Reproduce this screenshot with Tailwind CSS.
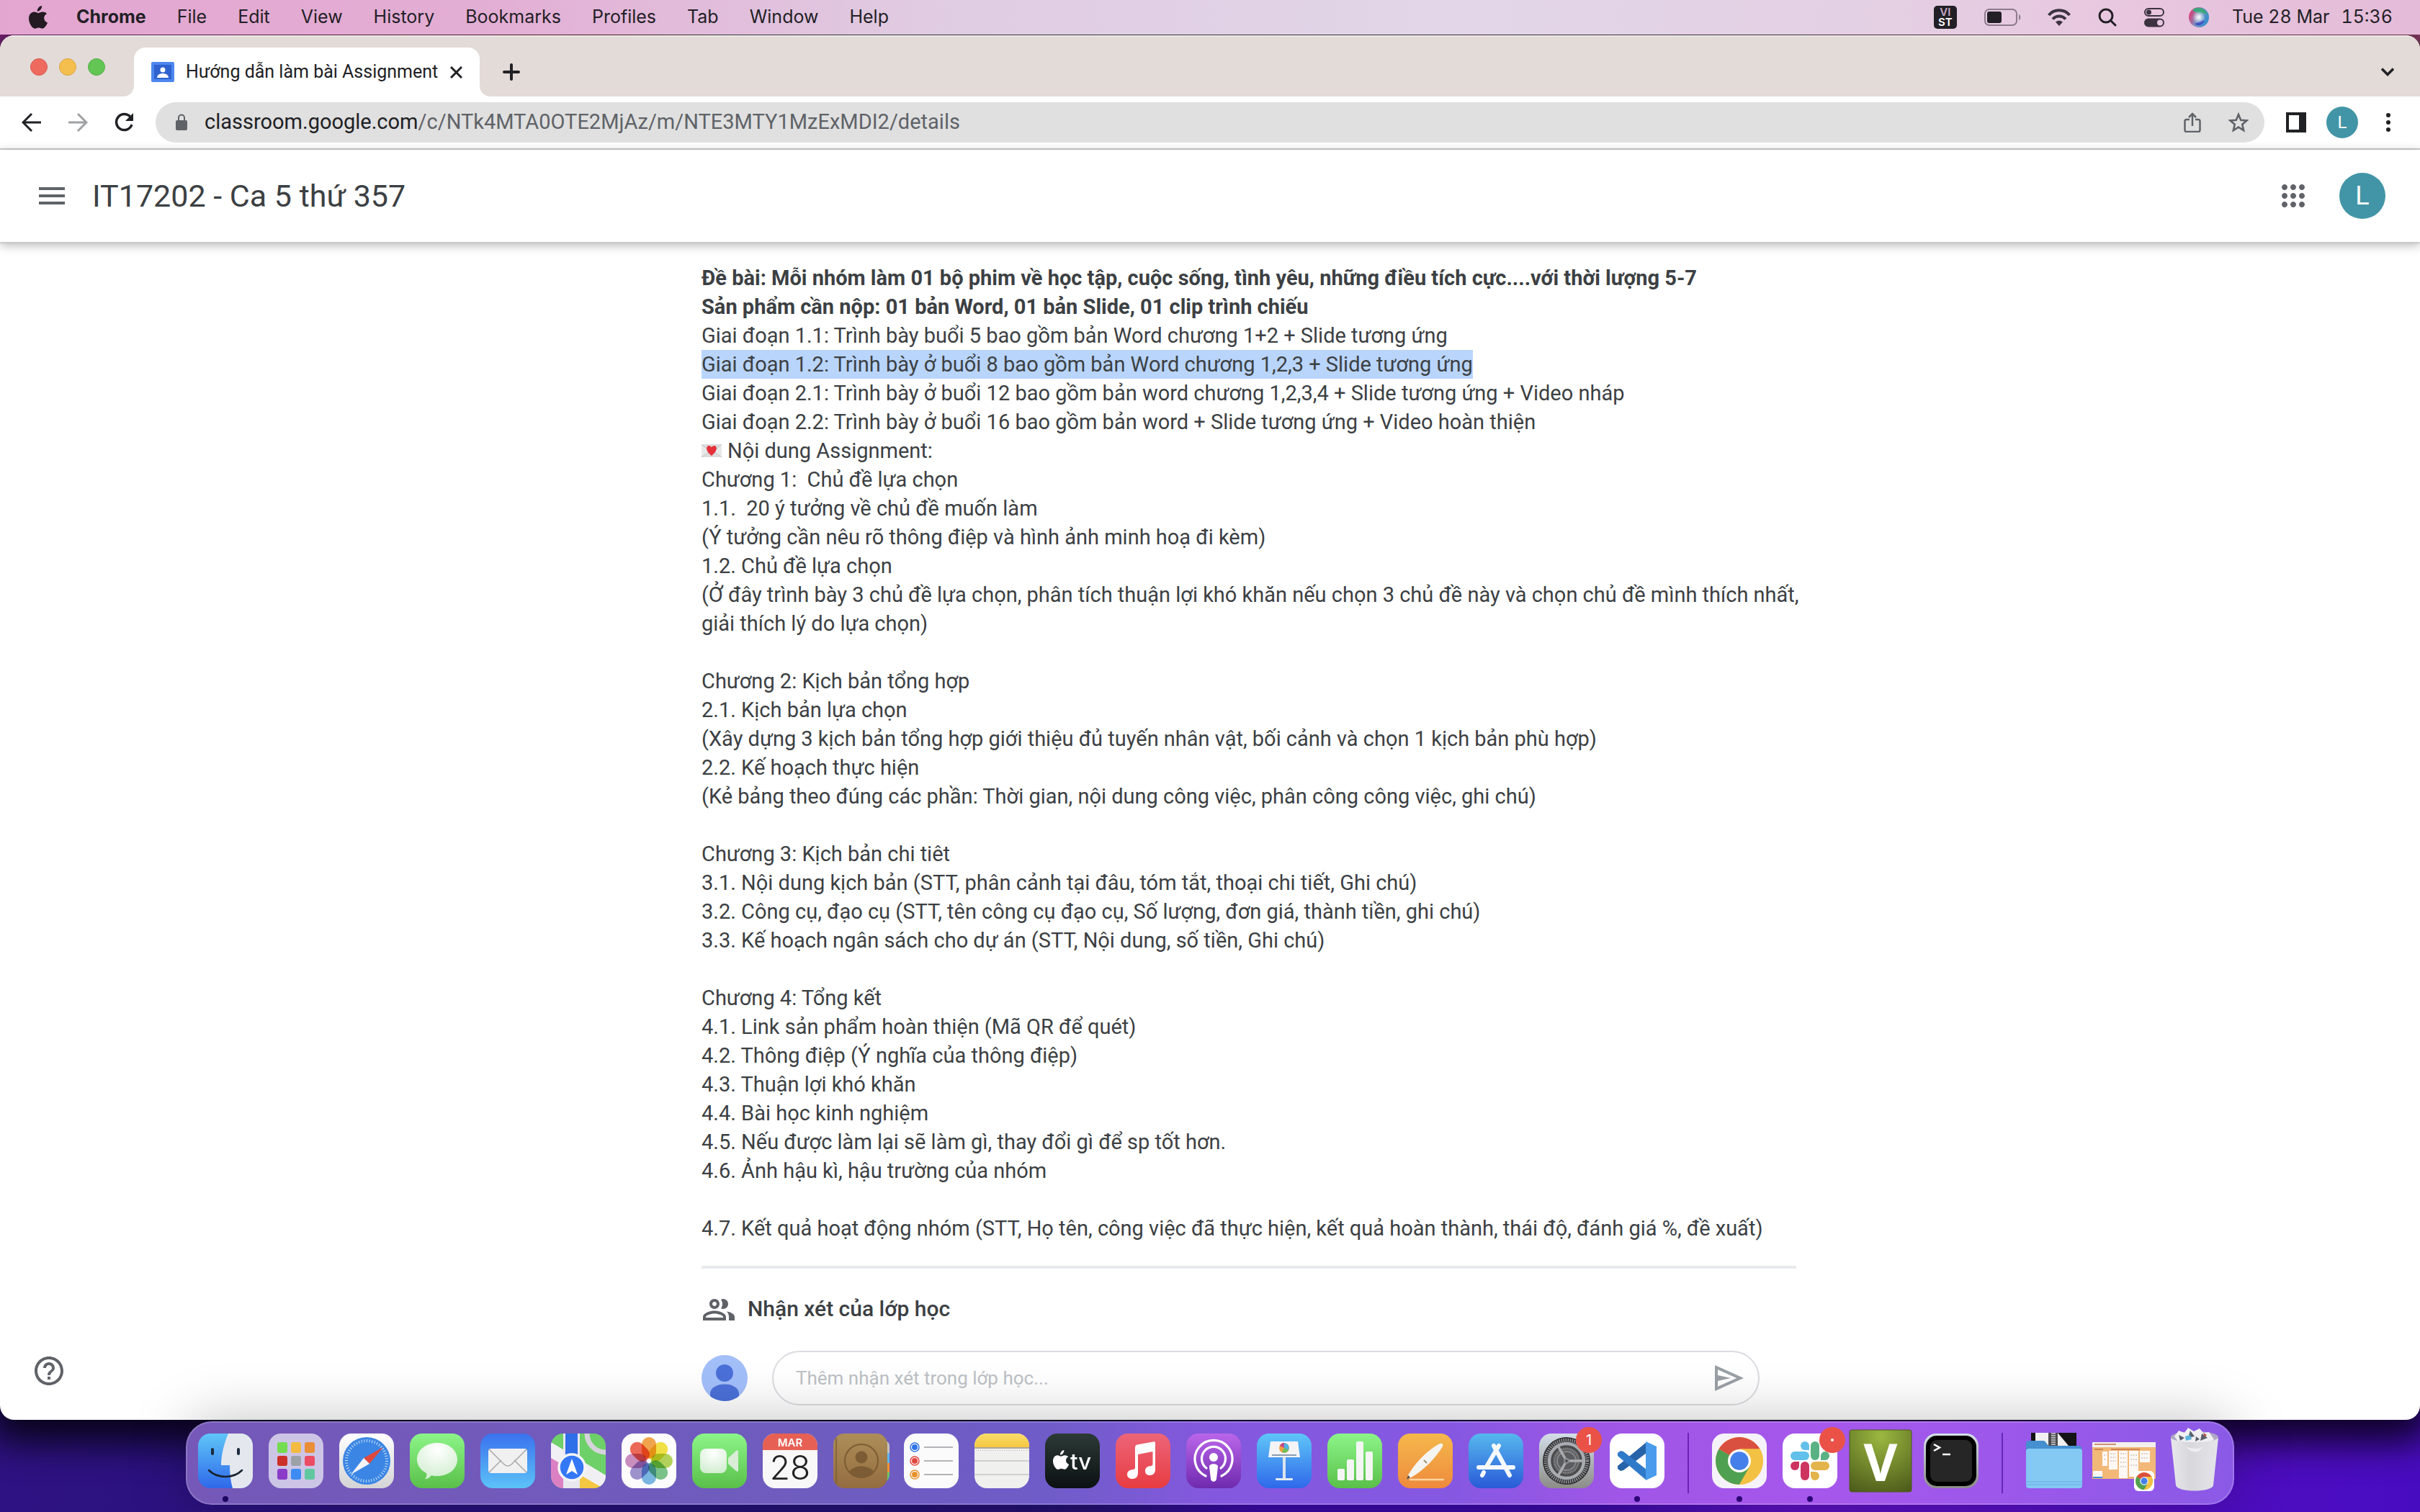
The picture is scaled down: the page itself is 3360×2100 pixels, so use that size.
<!DOCTYPE html>
<html lang="vi">
<head>
<meta charset="utf-8">
<title>Hướng dẫn làm bài Assignment</title>
<script src="https://cdn.jsdelivr.net/npm/@tailwindcss/browser@4"></script>
</head>
<body class="flex h-screen flex-col overflow-hidden bg-[linear-gradient(to_right,#8c2a8c,#7a3040_25%,#56606c_30%,#585060_60%,#a04878),linear-gradient(to_right,#2e1283,#231175_30%,#23106f_45%,#3a0aa5_52%,#3a0aa5_66%,#5c10c0_74%,#480cc0)] bg-[length:100%_200px,100%_100%] bg-no-repeat font-['Roboto',sans-serif] text-[#3c4043]">

<!-- System menu bar -->
<header class="relative z-10 flex h-12 shrink-0 items-center justify-between bg-[linear-gradient(to_right,#e3a6d0,#e3aed4_20%,#e0cbe2_38%,#e2d6e8_60%,#e4cfe3_78%,#e8c7df_88%,#e4bbd8)] pr-[38px] pl-10 font-['Inter',sans-serif] text-[25px] text-[#231f26]">
  <nav class="flex items-center gap-[43px]" aria-label="Menu bar">
    <a href="#" class="-mr-[3px]" aria-label="Apple"><svg class="h-8 w-[26px]" viewBox="0 0 26 32" fill="#231a22"><path d="M18 0c.3 2.300-.6 4.200-1.800 5.600-1.200 1.400-2.800 2.300-4.400 2.100-.2-2 .7-3.900 1.800-5.200C14.800 1.100 16.500.1 18 0zM25 11c-2.600 1.600-3.900 3.500-3.800 6.200.1 3 1.800 5 4.800 6.200-.9 2.700-4.100 8.200-7.200 8.200-2 0-2.700-1.200-5.200-1.200S10.300 31.600 8.500 31.700C4.900 31.800 0 24.500 0 17.800 0 12 3.600 8.700 7.300 8.600c2.400 0 4.400 1.600 5.900 1.600 1.400 0 3.800-1.800 6.600-1.600 1.200.1 3.700.5 5.200 2.400z"/></svg></a>
    <a href="#" class="font-bold">Chrome</a>
    <a href="#">File</a>
    <a href="#">Edit</a>
    <a href="#">View</a>
    <a href="#">History</a>
    <a href="#">Bookmarks</a>
    <a href="#">Profiles</a>
    <a href="#">Tab</a>
    <a href="#">Window</a>
    <a href="#">Help</a>
  </nav>
  <div class="flex items-center">
    <div class="mr-[38px] flex size-8 flex-col items-center justify-center rounded-[5px] bg-[#231f26] text-[15px] leading-[14px] font-semibold text-[#c5a9c4]"><span>VI</span><span class="text-white">ST</span></div>
    <svg class="mr-9 h-6 w-[52px]" viewBox="0 0 52 24"><rect x="1" y="1" width="44" height="22" rx="6" fill="none" stroke="#8d7a8d" stroke-width="2"/><rect x="4" y="4" width="20" height="16" rx="3" fill="#231f26"/><path d="M48 8c3 1 3 7 0 8z" fill="#8d7a8d"/></svg>
    <svg class="mr-[38px] h-6 w-8" viewBox="0 0 32 24" fill="none" stroke="#3c3240" stroke-width="4"><path d="M1.500 9C9 0 23 0 30.500 9M7 14.500c5-5.500 13-5.500 18 0"/><path d="M16 24l-5-5.500c3-2.500 7-2.500 10 0z" fill="#3c3240" stroke="none"/></svg>
    <svg class="mr-[38px] h-[26px] w-[26px]" viewBox="0 0 26 26" fill="none" stroke="#231f26" stroke-width="3" stroke-linecap="round"><circle cx="11" cy="11" r="9"/><path d="M18 18l6 6"/></svg>
    <svg class="mr-[34px] h-7 w-7" viewBox="0 0 28 28"><rect x="1" y="2" width="26" height="10" rx="5" fill="none" stroke="#3c3240" stroke-width="2"/><circle cx="6.500" cy="7" r="3.500" fill="#3c3240"/><rect y="15.500" width="28" height="12" rx="6" fill="#3c3240"/><circle cx="22" cy="21.500" r="4" fill="#e6c8e0"/></svg>
    <svg class="mr-8 h-7 w-7" viewBox="0 0 28 28"><defs><linearGradient id="siri" x1="0" y1=".3" x2="1" y2=".7"><stop offset="0" stop-color="#e0396f"/><stop offset=".45" stop-color="#7f8fc0"/><stop offset="1" stop-color="#2a8ed0"/></linearGradient><radialGradient id="glow"><stop offset="0" stop-color="#fff"/><stop offset="1" stop-color="#fff" stop-opacity="0"/></radialGradient></defs><circle cx="14" cy="14" r="14" fill="url(#siri)"/><path d="M5 4c6-6 18-4 21 6-6-2-14 0-21-6z" fill="#3da57f"/><path d="M8 23c5-1 10-6 14-4-3 6-10 8-14 4z" fill="#3b4dc0"/><circle cx="14" cy="14" r="9" fill="url(#glow)"/></svg>
    <time class="flex gap-4 tabular-nums"><span>Tue 28 Mar</span><span>15:36</span></time>
  </div>
</header>

<!-- Browser window -->
<main class="relative mt-px flex min-h-0 flex-1 flex-col overflow-hidden rounded-[20px] bg-white shadow-[0_16px_50px_16px_#000000cc]">
  <div class="flex h-[85px] shrink-0 items-end bg-[#e3dbd8] shadow-[inset_0_2px_0_#efe9e7]">
    <div class="mb-[29px] ml-[42px] flex gap-4">
      <button class="size-6 rounded-full border border-[#d8584d] bg-[#ee6a5f]" aria-label="Close window"></button>
      <button class="size-6 rounded-full border border-[#d9a441] bg-[#f5bf4f]" aria-label="Minimise"></button>
      <button class="size-6 rounded-full border border-[#54ae46] bg-[#62c554]" aria-label="Zoom"></button>
    </div>
    <svg class="ml-6 size-4" viewBox="0 0 16 16" fill="#fff"><path d="M16 0v16H0C10 16 16 10 16 0z"/></svg>
    <div class="flex h-[68px] w-[480px] items-center rounded-t-2xl bg-white pl-6">
      <svg class="mr-4 h-7 w-8" viewBox="0 0 32 28"><rect width="32" height="28" rx="2" fill="#4c86ee"/><rect x="4" y="4" width="24" height="20" fill="#2f62cf"/><circle cx="16" cy="11" r="3.500" fill="#fff"/><path d="M8 22c0-8 16-8 16 0z" fill="#fff"/></svg>
      <span class="w-[352px] truncate text-[25px] text-[#202124]">Hướng dẫn làm bài Assignment</span>
      <button class="ml-[15px]" aria-label="Close tab"><svg class="size-[17px]" viewBox="0 0 17 17" stroke="#202124" stroke-width="3"><path d="M1 1l15 15M16 1L1 16"/></svg></button>
    </div>
    <svg class="size-4" viewBox="0 0 16 16" fill="#fff"><path d="M0 0v16h16C6 16 0 10 0 0z"/></svg>
    <button class="mb-[22px] ml-4" aria-label="New tab"><svg class="size-6" viewBox="0 0 24 24" stroke="#202124" stroke-width="4" stroke-linecap="round"><path d="M12 2v20M2 12h20"/></svg></button>
    <button class="mr-9 mb-7 ml-auto" aria-label="Search tabs"><svg class="h-3 w-[18px]" viewBox="0 0 18 12" fill="none" stroke="#202124" stroke-width="3.500"><path d="M1 1.500l8 8 8-8"/></svg></button>
  </div>

  <div class="flex h-[74px] shrink-0 items-center border-b-2 border-[#cbcbcb] bg-white pr-[41px] pl-[30px]">
    <button class="mr-9" aria-label="Back"><svg class="size-7" viewBox="0 0 28 28" fill="none" stroke="#202124" stroke-width="3"><path d="M27 14H3M14 2L2 14l12 12"/></svg></button>
    <button class="mr-9" aria-label="Forward"><svg class="size-7" viewBox="0 0 28 28" fill="none" stroke="#a0a1a3" stroke-width="3"><path d="M1 14h24M14 2l12 12-12 12"/></svg></button>
    <button class="mr-[30px]" aria-label="Reload"><svg class="size-7" viewBox="0 0 28 28" fill="none" stroke="#202124" stroke-width="3.500"><path d="M23 6.500A11 11 0 1 0 25 17"/><path d="M27 1v11H16z" fill="#202124" stroke="none"/></svg></button>
    <div class="flex h-14 flex-1 items-center rounded-full bg-[#e0e0e0] pr-[22px] pl-7">
      <svg class="mr-6 h-6 w-4" viewBox="0 0 16 24" fill="#5f6368"><rect y="9" width="16" height="14" rx="2"/><path d="M4 10V5.500a4 4 0 0 1 8 0V10" fill="none" stroke="#5f6368" stroke-width="2"/></svg>
      <div class="flex-1 text-[29px] text-[#5f6368]"><span class="text-[#202124]">classroom.google.com</span>/c/NTk4MTA0OTE2MjAz/m/NTE3MTY1MzExMDI2/details</div>
      <button class="mr-[38px]" aria-label="Share"><svg class="h-7 w-6" viewBox="0 0 24 28" fill="none" stroke="#5f6368" stroke-width="2.500"><path d="M8 10H4a2.500 2.500 0 0 0-2.500 2.500v12A2.500 2.500 0 0 0 4 27h16a2.500 2.500 0 0 0 2.500-2.500v-12A2.500 2.500 0 0 0 20 10h-4M12 19V2M7 7l5-5 5 5"/></svg></button>
      <button aria-label="Bookmark"><svg class="size-7" viewBox="0 0 28 28" fill="none" stroke="#5f6368" stroke-width="2.600"><path d="M14 3l3.200 7.700 8.300.7-6.300 5.400 1.900 8.200L14 20.600 6.900 25l1.900-8.200-6.300-5.400 8.300-.7z"/></svg></button>
    </div>
    <button class="ml-[30px]" aria-label="Side panel"><svg class="size-7" viewBox="0 0 28 28"><path d="M0 0h28v28H0z" fill="#202124"/><path d="M4 4h14v20H4z" fill="#fff"/></svg></button>
    <button class="ml-7 size-11 rounded-full bg-[#4295a6] text-2xl text-white" aria-label="Profile">L</button>
    <button class="ml-[39px]" aria-label="More"><svg class="h-[26px] w-1.5" viewBox="0 0 6 26" fill="#202124"><circle cx="3" cy="3" r="3"/><circle cx="3" cy="13" r="3"/><circle cx="3" cy="23" r="3"/></svg></button>
  </div>

  <div class="relative z-10 flex h-32 shrink-0 items-center bg-white pr-12 pl-12 shadow-[0_2px_2px_#c8c9ca,0_4px_14px_#0000004d]">
    <button aria-label="Main menu"><svg class="size-12" viewBox="0 0 24 24" fill="#5f6368"><path d="M3 18h18v-2H3v2zm0-5h18v-2H3v2zm0-7v2h18V6H3z"/></svg></button>
    <h1 class="ml-8 text-[43px]"><a href="#">IT17202 - Ca 5 thứ 357</a></h1>
    <button class="mr-10 ml-auto" aria-label="Google apps"><svg class="size-12" viewBox="0 0 24 24" fill="#5f6368"><path d="M6 8c1.100 0 2-.9 2-2s-.9-2-2-2-2 .9-2 2 .9 2 2 2zm6 12c1.100 0 2-.9 2-2s-.9-2-2-2-2 .9-2 2 .9 2 2 2zm-6 0c1.100 0 2-.9 2-2s-.9-2-2-2-2 .9-2 2 .9 2 2 2zm0-6c1.100 0 2-.9 2-2s-.9-2-2-2-2 .9-2 2 .9 2 2 2zm6 0c1.100 0 2-.9 2-2s-.9-2-2-2-2 .9-2 2 .9 2 2 2zm4-8c0 1.100.9 2 2 2s2-.9 2-2-.9-2-2-2-2 .9-2 2zm-4 2c1.100 0 2-.9 2-2s-.9-2-2-2-2 .9-2 2 .9 2 2 2zm6 6c1.100 0 2-.9 2-2s-.9-2-2-2-2 .9-2 2 .9 2 2 2zm0 6c1.100 0 2-.9 2-2s-.9-2-2-2-2 .9-2 2 .9 2 2 2z"/></svg></button>
    <button class="size-16 rounded-full bg-[#4295a6] text-4xl text-white" aria-label="Account">L</button>
  </div>

  <div class="mx-auto w-full max-w-[1628px] pt-[30px] pl-[108px]">
    <article class="-mr-6 text-[29px] leading-10">
      <p class="font-bold">Đề bài: Mỗi nhóm làm 01 bộ phim về học tập, cuộc sống, tình yêu, những điều tích cực....với thời lượng 5-7</p>
      <p class="font-bold">Sản phẩm cần nộp: 01 bản Word, 01 bản Slide, 01 clip trình chiếu</p>
      <p>Giai đoạn 1.1: Trình bày buổi 5 bao gồm bản Word chương 1+2 + Slide tương ứng</p>
      <p class="w-fit bg-[#b9d5fb]">Giai đoạn 1.2: Trình bày ở buổi 8 bao gồm bản Word chương 1,2,3 + Slide tương ứng</p>
      <p>Giai đoạn 2.1: Trình bày ở buổi 12 bao gồm bản word chương 1,2,3,4 + Slide tương ứng + Video nháp</p>
      <p>Giai đoạn 2.2: Trình bày ở buổi 16 bao gồm bản word + Slide tương ứng + Video hoàn thiện</p>
      <p class="flex items-center gap-2"><svg class="h-[18px] w-7" viewBox="0 0 28 18"><rect width="28" height="18" rx="1" fill="#dcdcdc"/><path d="M0 0l11 10L0 18M28 0L17 10l11 8" fill="#e9e9e9" stroke="#c4c4c4"/><path d="M14 16C4 8 7 2 10.500 2 13 2 14 4.500 14 4.500S15 2 17.500 2C21 2 24 8 14 16z" fill="#e5303a"/></svg>Nội dung Assignment:</p>
      <p>Chương 1:&nbsp; Chủ đề lựa chọn</p>
      <p>1.1.&nbsp; 20 ý tưởng về chủ đề muốn làm</p>
      <p>(Ý tưởng cần nêu rõ thông điệp và hình ảnh minh hoạ đi kèm)</p>
      <p>1.2. Chủ đề lựa chọn</p>
      <p>(Ở đây trình bày 3 chủ đề lựa chọn, phân tích thuận lợi khó khăn nếu chọn 3 chủ đề này và chọn chủ đề mình thích nhất, giải thích lý do lựa chọn)</p>
      <p class="mt-10">Chương 2: Kịch bản tổng hợp</p>
      <p>2.1. Kịch bản lựa chọn</p>
      <p>(Xây dựng 3 kịch bản tổng hợp giới thiệu đủ tuyến nhân vật, bối cảnh và chọn 1 kịch bản phù hợp)</p>
      <p>2.2. Kế hoạch thực hiện</p>
      <p>(Kẻ bảng theo đúng các phần: Thời gian, nội dung công việc, phân công công việc, ghi chú)</p>
      <p class="mt-10">Chương 3: Kịch bản chi tiêt</p>
      <p>3.1. Nội dung kịch bản (STT, phân cảnh tại đâu, tóm tắt, thoại chi tiết, Ghi chú)</p>
      <p>3.2. Công cụ, đạo cụ (STT, tên công cụ đạo cụ, Số lượng, đơn giá, thành tiền, ghi chú)</p>
      <p>3.3. Kế hoạch ngân sách cho dự án (STT, Nội dung, số tiền, Ghi chú)</p>
      <p class="mt-10">Chương 4: Tổng kết</p>
      <p>4.1. Link sản phẩm hoàn thiện (Mã QR để quét)</p>
      <p>4.2. Thông điệp (Ý nghĩa của thông điệp)</p>
      <p>4.3. Thuận lợi khó khăn</p>
      <p>4.4. Bài học kinh nghiệm</p>
      <p>4.5. Nếu được làm lại sẽ làm gì, thay đổi gì để sp tốt hơn.</p>
      <p>4.6. Ảnh hậu kì, hậu trường của nhóm</p>
      <p class="mt-10">4.7. Kết quả hoạt động nhóm (STT, Họ tên, công việc đã thực hiện, kết quả hoàn thành, thái độ, đánh giá %, đề xuất)</p>
    </article>

    <section class="mt-8 border-t-4 border-[#e8eaed] pt-8">
      <h2 class="flex items-center gap-4 text-3xl leading-12 font-medium"><svg class="size-12" viewBox="0 0 24 24" fill="#5f6368"><path fill-rule="evenodd" d="M9 12c1.930 0 3.500-1.570 3.500-3.500S10.930 5 9 5 5.500 6.570 5.500 8.500 7.070 12 9 12zm0-5c.83 0 1.500.67 1.500 1.500S9.830 10 9 10s-1.500-.67-1.500-1.500S8.170 7 9 7zm0 6.200c-2.340 0-8 1.200-8 4.300V20h16v-2.500c0-3.100-5.660-4.300-8-4.300zM3 18v-.5c0-1 3.300-2.300 6-2.300s6 1.300 6 2.300v.5H3zM15 12c1.930 0 3.500-1.570 3.500-3.500S16.930 5 15 5c-.54 0-1.040.13-1.500.35.630.89 1 1.980 1 3.150s-.37 2.260-1 3.150c.46.220.96.350 1.500.35zM17.500 13.700c.9.900 1.500 2.200 1.500 3.800V20h4v-2.500c0-2-2.500-3.300-5.500-3.800z"/></svg>Nhận xét của lớp học</h2>
      <div class="mt-[34px] flex items-center pr-[51px]">
        <svg class="size-16 shrink-0" viewBox="0 0 64 64"><defs><clipPath id="face"><circle cx="32" cy="32" r="32"/></clipPath></defs><g clip-path="url(#face)"><path d="M0 0h64v64H0z" fill="#a3bffa"/><circle cx="32" cy="25" r="12" fill="#4b70d8"/><path d="M12 64V54c0-18 40-18 40 0v10z" fill="#4b70d8"/></g></svg>
        <form class="ml-[34px] flex h-[76px] flex-1 items-center rounded-full border-2 border-[#dadce0] pr-4 pl-[31px]">
          <input type="text" aria-label="Thêm nhận xét trong lớp học" placeholder="Thêm nhận xét trong lớp học..." class="min-w-0 flex-1 text-[26px] outline-none placeholder:text-[#bdc1c6]">
          <button type="button" aria-label="Post"><svg class="size-12" viewBox="0 0 24 24" fill="#9aa0a6"><path d="M2 3v18l20-9L2 3zm2 11l9-2-9-2V6.090L17.130 12 4 17.910V14z"/></svg></button>
        </form>
      </div>
    </section>
  </div>

  <button class="absolute bottom-11 left-11" aria-label="Help"><svg class="size-12" viewBox="0 0 24 24" fill="#5f6368"><path d="M11 18h2v-2h-2v2zm1-16C6.480 2 2 6.480 2 12s4.480 10 10 10 10-4.480 10-10S17.520 2 12 2zm0 18c-4.410 0-8-3.590-8-8s3.590-8 8-8 8 3.590 8 8-3.590 8-8 8zm0-14c-2.210 0-4 1.790-4 4h2c0-1.100.9-2 2-2s2 .9 2 2c0 2-3 1.750-3 5h2c0-2.250 3-2.500 3-5 0-2.210-1.790-4-4-4z"/></svg></button>
</main>

<!-- Gradients shared by the dock icons -->
<svg class="absolute size-0" aria-hidden="true"><defs>
  <linearGradient id="gBlue" x2="0" y2="1"><stop stop-color="#5fc6f8"/><stop offset="1" stop-color="#2f68ea"/></linearGradient>
  <linearGradient id="gMail" x2="0" y2="1"><stop stop-color="#3a72ee"/><stop offset="1" stop-color="#5cc2f8"/></linearGradient>
  <linearGradient id="gGreen" x2="0" y2="1"><stop stop-color="#8cf588"/><stop offset="1" stop-color="#5ac04a"/></linearGradient>
  <linearGradient id="gGrey" x2="0" y2="1"><stop stop-color="#fff"/><stop offset="1" stop-color="#d4d4d6"/></linearGradient>
  <linearGradient id="gDark" x2="0" y2="1"><stop stop-color="#2c3a36"/><stop offset="1" stop-color="#0c1012"/></linearGradient>
  <linearGradient id="gRed" x2="0" y2="1"><stop stop-color="#ec6578"/><stop offset="1" stop-color="#e83c42"/></linearGradient>
  <linearGradient id="gPurple" x2="0" y2="1"><stop stop-color="#bb66ea"/><stop offset="1" stop-color="#6f2aae"/></linearGradient>
  <linearGradient id="gOrange" x2="0" y2="1"><stop stop-color="#f5b84c"/><stop offset="1" stop-color="#ee8a3c"/></linearGradient>
  <linearGradient id="gStore" x2="0" y2="1"><stop stop-color="#56b8ee"/><stop offset="1" stop-color="#2a5ad8"/></linearGradient>
  <linearGradient id="gSteel" x2="0" y2="1"><stop stop-color="#d4dee8"/><stop offset="1" stop-color="#8c8c88"/></linearGradient>
  <linearGradient id="gBrown" x2="0" y2="1"><stop stop-color="#ad8e58"/><stop offset="1" stop-color="#946c40"/></linearGradient>
  <linearGradient id="gBin"><stop stop-color="#e8e8ec"/><stop offset=".4" stop-color="#d8d8dc"/><stop offset="1" stop-color="#e4e4ea"/></linearGradient>
  <radialGradient id="gVim" cx=".5" cy=".1" r="1"><stop stop-color="#9cb840"/><stop offset="1" stop-color="#4c5a1a"/></radialGradient>
  <radialGradient id="gBubble" cx=".5" cy=".2" r=".9"><stop stop-color="#fff"/><stop offset="1" stop-color="#cdeccb"/></radialGradient>
  <linearGradient id="gNote" x2="0" y2="1"><stop stop-color="#fadd6c"/><stop offset="1" stop-color="#f5c740"/></linearGradient>
  <symbol id="chromeMark" viewBox="0 0 62 62"><circle cx="31" cy="31" r="31" fill="#f3c143"/><path d="M31 31L4.200 15.500A31 31 0 0 1 57.800 15.500H31z" fill="#da5040"/><path d="M31 31L4.200 15.500A31 31 0 0 0 31 62L44.400 38.700z" fill="#50a052"/><path d="M31 15.500h26.800A31 31 0 0 1 31 62L44.400 38.700z" fill="#f3c143"/><circle cx="31" cy="31" r="15" fill="#fff"/><circle cx="31" cy="31" r="12" fill="#4580ea"/></symbol>
</defs></svg>

<!-- Dock -->
<footer class="relative z-20 flex shrink-0 justify-center pt-0.5 pb-2.5">
  <nav aria-label="Dock" class="flex items-start rounded-[36px] border-2 border-[#ffffff2e] bg-[linear-gradient(to_right,#7558b8,#6e5cbe_30%,#6f5cc8_42%,#8458de_50%,#8658e2_62%,#a056e6_70%,#a657ec_80%,#9a58ea_90%,#8a5ae6)] bg-origin-border px-1 pt-[15px] pb-0.5 shadow-[0_0_80px_#00000040]">
    <a href="#" aria-label="Finder" class="flex w-[98px] flex-col items-center gap-[11px]"><svg class="size-[76px]" viewBox="0 0 76 76"><defs><clipPath id="sq"><rect width="76" height="76" rx="17"/></clipPath></defs><g clip-path="url(#sq)"><path d="M0 0h76v76H0z" fill="url(#gBlue)"/><path d="M42 0C36 14 32 30 32 44h12c0 12 1 22 4 32h28V0z" fill="#e4e8ee"/><path d="M20 22v6M56 22v6" stroke="#1c2a3c" stroke-width="4" stroke-linecap="round"/><path d="M15 51c12 12 34 12 46 0" fill="none" stroke="#16222e" stroke-width="2.500" stroke-linecap="round"/></g></svg><span class="size-2 rounded-full bg-[#1c0560]"></span></a>
    <a href="#" aria-label="Launchpad" class="flex w-[98px] justify-center"><svg class="size-[76px]" viewBox="0 0 76 76"><rect width="76" height="76" rx="17" fill="#cdc5e6"/><g><rect x="12" y="12" width="14" height="15" rx="3" fill="#74dc50"/><rect x="31" y="12" width="14" height="15" rx="3" fill="#f3bc40"/><rect x="50" y="12" width="14" height="15" rx="3" fill="#ea8e38"/><rect x="12" y="31" width="14" height="14" rx="3" fill="#cc3028"/><rect x="31" y="31" width="14" height="14" rx="3" fill="#9ca2a8"/><rect x="50" y="31" width="14" height="14" rx="3" fill="#ec4c64"/><rect x="12" y="49" width="14" height="15" rx="3" fill="#8a3cc8"/><rect x="31" y="49" width="14" height="15" rx="3" fill="#3c8cf4"/><rect x="50" y="49" width="14" height="15" rx="3" fill="#60c8a0"/></g></svg></a>
    <a href="#" aria-label="Safari" class="flex w-[98px] justify-center"><svg class="size-[76px]" viewBox="0 0 76 76"><rect width="76" height="76" rx="17" fill="url(#gGrey)"/><circle cx="38" cy="38" r="33" fill="#3b86e4"/><circle cx="38" cy="38" r="28" fill="none" stroke="#cfe4fb" stroke-width="4" stroke-dasharray="1 2.660"/><path d="M61 19L42 42l-8-8z" fill="#e0483e"/><path d="M16 57l18-23 8 8z" fill="#f4f4f6"/></svg></a>
    <a href="#" aria-label="Messages" class="flex w-[98px] justify-center"><svg class="size-[76px]" viewBox="0 0 76 76"><rect width="76" height="76" rx="17" fill="url(#gGreen)"/><path d="M38 13c16 0 28 10 28 23S54 59 38 59c-3 0-6 0-8-1-2 3-5 5-9 5 2-2 3-5 2-8-8-4-13-11-13-19 0-13 12-23 28-23z" fill="url(#gBubble)"/></svg></a>
    <a href="#" aria-label="Mail" class="flex w-[98px] justify-center"><svg class="size-[76px]" viewBox="0 0 76 76"><rect width="76" height="76" rx="17" fill="url(#gMail)"/><rect x="11" y="21" width="54" height="34" rx="4" fill="#f0f0f0"/><path d="M12 54l17-17M64 54L47 37M12 22l20 20c4 4 8 4 12 0l20-20" fill="none" stroke="#a8a8a8" stroke-width="1.500"/></svg></a>
    <a href="#" aria-label="Maps" class="flex w-[98px] justify-center"><svg class="size-[76px]" viewBox="0 0 76 76"><g clip-path="url(#sq)"><path d="M0 0h76v76H0z" fill="#6ed068"/><path d="M0 30l18 10v36H0z" fill="#dc80c4"/><path d="M40 50l36 26H40z" fill="#f4c842"/><path d="M0 12l76 46v20L0 34z" fill="#f0f0f4"/><path d="M17 0h23v76H17z" fill="#e8e8ee"/><path d="M20 0h17v38H20z" fill="#2f6fe8"/><circle cx="76" cy="0" r="26" fill="none" stroke="#d4d4da" stroke-width="7"/><circle cx="29" cy="47" r="18" fill="#3478f6" stroke="#f4f4f6" stroke-width="3.500"/><path d="M29 35l8 22-8-5-8 5z" fill="#fff"/></g></svg></a>
    <a href="#" aria-label="Photos" class="flex w-[98px] justify-center"><svg class="size-[76px]" viewBox="0 0 76 76"><rect width="76" height="76" rx="17" fill="#fcfcfc"/><g><rect class="mix-blend-multiply" x="28" y="5" width="20" height="30" rx="10" fill="#f3a64c"/><rect class="mix-blend-multiply" x="28" y="5" width="20" height="30" rx="10" fill="#f3e347" transform="rotate(45 38 38)"/><rect class="mix-blend-multiply" x="28" y="5" width="20" height="30" rx="10" fill="#b4d45c" transform="rotate(90 38 38)"/><rect class="mix-blend-multiply" x="28" y="5" width="20" height="30" rx="10" fill="#7cc48c" transform="rotate(135 38 38)"/><rect class="mix-blend-multiply" x="28" y="5" width="20" height="30" rx="10" fill="#7cb8e4" transform="rotate(180 38 38)"/><rect class="mix-blend-multiply" x="28" y="5" width="20" height="30" rx="10" fill="#a094d0" transform="rotate(225 38 38)"/><rect class="mix-blend-multiply" x="28" y="5" width="20" height="30" rx="10" fill="#cc90c0" transform="rotate(270 38 38)"/><rect class="mix-blend-multiply" x="28" y="5" width="20" height="30" rx="10" fill="#ee6a58" transform="rotate(315 38 38)"/></g></svg></a>
    <a href="#" aria-label="FaceTime" class="flex w-[98px] justify-center"><svg class="size-[76px]" viewBox="0 0 76 76"><rect width="76" height="76" rx="17" fill="url(#gGreen)"/><rect x="11" y="21" width="37" height="34" rx="8" fill="url(#gBubble)"/><path d="M50 34l11-10c2-1 3-1 3 1v26c0 2-1 2-3 1L50 42z" fill="#d8ecd6"/></svg></a>
    <a href="#" aria-label="Calendar" class="flex w-[98px] justify-center"><svg class="size-[76px]" viewBox="0 0 76 76"><g clip-path="url(#sq)"><path d="M0 0h76v76H0z" fill="#f8f8f8"/><path d="M0 0h76v23H0z" fill="#e66054"/></g><text x="38" y="18" text-anchor="middle" font-family="Inter" font-weight="600" font-size="15" fill="#fff">MAR</text><text x="38" y="64" text-anchor="middle" font-family="Inter" font-weight="300" font-size="46" fill="#222">28</text></svg></a>
    <a href="#" aria-label="Contacts" class="flex w-[98px] justify-center"><svg class="size-[76px] overflow-visible" viewBox="0 0 76 76"><path d="M70 10c6 0 8 4 8 8v9h-8z" fill="#c8c4bc"/><path d="M70 27h8v14h-8z" fill="#5cb8ec"/><path d="M70 41h8v13h-8z" fill="#f09030"/><path d="M70 54h8c0 8-2 12-8 14z" fill="#68cc60"/><rect width="75" height="76" rx="15" fill="url(#gBrown)"/><path d="M4 6v64" stroke="#7c5c34" stroke-width="1.500"/><circle cx="39" cy="38" r="23" fill="none" stroke="#7c5c34" stroke-width="2"/><circle cx="39" cy="33" r="8.500" fill="#7c5c34"/><path d="M22 53c7-10 27-10 34 0-8 11-26 11-34 0z" fill="#7c5c34"/></svg></a>
    <a href="#" aria-label="Reminders" class="flex w-[98px] justify-center"><svg class="size-[76px]" viewBox="0 0 76 76"><rect width="76" height="76" rx="17" fill="#fbfbfb"/><path d="M28 19h40M28 38h40M28 57h40" stroke="#b4b4b8" stroke-width="1.800"/><g fill="none" stroke-width="1.500"><circle cx="15" cy="19" r="6" stroke="#2f74e8"/><circle cx="15" cy="38" r="6" stroke="#e0463c"/><circle cx="15" cy="57" r="6" stroke="#e8922e"/></g><circle cx="15" cy="19" r="4" fill="#2f74e8"/><circle cx="15" cy="38" r="4" fill="#e0463c"/><circle cx="15" cy="57" r="4" fill="#e8922e"/></svg></a>
    <a href="#" aria-label="Notes" class="flex w-[98px] justify-center"><svg class="size-[76px]" viewBox="0 0 76 76"><g clip-path="url(#sq)"><path d="M0 0h76v76H0z" fill="#f0f0ee"/><path d="M0 0h76v19H0z" fill="url(#gNote)"/><path d="M0 20h76" stroke="#b0a898" stroke-width="2"/><path d="M2 23.500h74" stroke="#b4b4b0" stroke-dasharray="1 2"/><path d="M0 38h76M0 57h76" stroke="#d0d0d0" stroke-width="2"/></g></svg></a>
    <a href="#" aria-label="TV" class="flex w-[98px] justify-center"><svg class="size-[76px]" viewBox="0 0 76 76"><rect width="76" height="76" rx="17" fill="url(#gDark)"/><path transform="translate(11 23) scale(.85)" d="M18 0c.3 2.300-.6 4.200-1.800 5.600-1.200 1.400-2.800 2.300-4.400 2.100-.2-2 .7-3.900 1.800-5.200C14.800 1.100 16.500.1 18 0zM25 11c-2.600 1.600-3.900 3.500-3.800 6.200.1 3 1.800 5 4.800 6.200-.9 2.700-4.100 8.200-7.200 8.200-2 0-2.700-1.200-5.200-1.200S10.300 31.600 8.500 31.700C4.900 31.800 0 24.500 0 17.800 0 12 3.600 8.700 7.300 8.600c2.400 0 4.400 1.600 5.900 1.600 1.400 0 3.800-1.800 6.600-1.600 1.200.1 3.700.5 5.200 2.400z" fill="#fff"/><text x="35" y="50" font-family="Inter" font-weight="500" font-size="31" fill="#fff">tv</text></svg></a>
    <a href="#" aria-label="Music" class="flex w-[98px] justify-center"><svg class="size-[76px]" viewBox="0 0 76 76"><rect width="76" height="76" rx="17" fill="url(#gRed)"/><path d="M27 20c0-3 1-4 3-4.500l22-4c2-.4 3 0 3 2V50c0 5-3 8-7.500 8S41 55.500 41 52c0-5 4-6.500 8-7 2-.4 2.500-1 2.500-3V25L31 29v26c0 5-3 8-8 8-4 0-7-2.500-7-6 0-5 4-6.500 8-7 2.500-.4 3-1 3-3z" fill="#fff"/></svg></a>
    <a href="#" aria-label="Podcasts" class="flex w-[98px] justify-center"><svg class="size-[76px]" viewBox="0 0 76 76"><rect width="76" height="76" rx="17" fill="url(#gPurple)"/><g fill="none" stroke="#fff" stroke-width="3.200" stroke-linecap="round"><path d="M27 59a26 26 0 1 1 22 0"/><path d="M28 48a16.500 16.500 0 1 1 20 0"/></g><circle cx="38" cy="33" r="6" fill="#fff"/><path d="M32 46c0-5 12-5 12 0l-2 17c-.5 5-7.500 5-8 0z" fill="#fff"/></svg></a>
    <a href="#" aria-label="Keynote" class="flex w-[98px] justify-center"><svg class="size-[76px]" viewBox="0 0 76 76"><rect width="76" height="76" rx="17" fill="url(#gBlue)"/><path d="M36 33h4v30h-4z" fill="#dce4ee"/><rect x="26" y="62" width="24" height="3" rx="1" fill="#e4eaf2"/><path d="M19 11h38l3 22H16z" fill="#f4f4f6"/><path d="M21 29h34v2H21z" fill="#8c9cb0"/><circle cx="38" cy="20" r="7" fill="#f0a040"/><path d="M38 20v-7a7 7 0 0 1 6 10z" fill="#4cb4e8"/><path d="M38 20l6 3a7 7 0 0 1-9 3z" fill="#68c060"/><path d="M38 20l-6-3a7 7 0 0 1 6-4z" fill="#c04890"/></svg></a>
    <a href="#" aria-label="Numbers" class="flex w-[98px] justify-center"><svg class="size-[76px]" viewBox="0 0 76 76"><rect width="76" height="76" rx="17" fill="url(#gGreen)"/><g fill="#f4f6f4"><rect x="14" y="49" width="10" height="16" rx="2"/><rect x="27" y="36" width="10" height="29" rx="2"/><rect x="40" y="11" width="10" height="54" rx="2"/><rect x="53" y="25" width="10" height="40" rx="2"/></g></svg></a>
    <a href="#" aria-label="Pages" class="flex w-[98px] justify-center"><svg class="size-[76px]" viewBox="0 0 76 76"><rect width="76" height="76" rx="17" fill="url(#gOrange)"/><path d="M16 64h48" stroke="#fbd4a0" stroke-width="2.500"/><path d="M12 64l3-8C25 40 40 24 57 14.500c5-2 7 1 4 5C52 34 37 50 20 60z" fill="#f6f4f0"/><path d="M36 37l4 4" stroke="#9c8c78" stroke-width="2"/><path d="M12 64l2-6 3 3z" fill="#584838"/></svg></a>
    <a href="#" aria-label="App Store" class="flex w-[98px] justify-center"><svg class="size-[76px]" viewBox="0 0 76 76"><rect width="76" height="76" rx="17" fill="url(#gStore)"/><g stroke="#f6f8fc" stroke-width="6" stroke-linecap="round"><path d="M42 17L26 44M14 47h48M35 17l22 41M21 54l-2 4"/></g></svg></a>
    <a href="#" aria-label="System Preferences" class="relative flex w-[98px] justify-center"><svg class="size-[76px]" viewBox="0 0 76 76"><rect width="76" height="76" rx="17" fill="url(#gSteel)"/><circle cx="38" cy="38" r="33" fill="#2c2c2e"/><circle cx="38" cy="38" r="29" fill="none" stroke="#94979a" stroke-width="5" stroke-dasharray="1.500 1.500"/><circle cx="38" cy="38" r="24" fill="#4a4a4c" stroke="#a8acb0" stroke-width="4.500"/><circle cx="38" cy="38" r="17" fill="#5c5c5e" stroke="#85878a" stroke-width="3" stroke-dasharray="1.500 1"/><circle cx="38" cy="38" r="13" fill="#5c5c5e" stroke="#85878a" stroke-width="2"/><path d="M38 38h24M38 38L26 17M38 38L26 59" stroke="#a8acb0" stroke-width="3.500"/><circle cx="38" cy="38" r="4" fill="#88898c"/><circle cx="38" cy="38" r="1.500" fill="#333"/></svg><span class="absolute -top-[9px] right-0 flex size-9 items-center justify-center rounded-full bg-[#ea5248] font-['Inter',sans-serif] text-xl text-white">1</span></a>
    <a href="#" aria-label="Visual Studio Code" class="flex w-[98px] flex-col items-center gap-[11px]"><svg class="size-[76px]" viewBox="0 0 76 76"><rect width="76" height="76" rx="17" fill="#fff"/><path d="M51 12L11 45v4l4 3 4-1 32-24z" fill="#2763a8"/><path d="M51 65L11 31v-4l4-3 4 1 32 25z" fill="#2f7ac8"/><path d="M50 11l15 7v40l-15 7z" fill="#4a9cec"/></svg><span class="size-2 rounded-full bg-[#2c0478]"></span></a>
    <div class="flex w-11 justify-center"><span class="-mt-px h-[84px] w-0.5 bg-[#6c22b8]"></span></div>
    <a href="#" aria-label="Chrome" class="flex w-[98px] flex-col items-center gap-[11px]"><svg class="size-[76px]" viewBox="0 0 76 76"><rect width="76" height="76" rx="17" fill="#f6f2fa"/><use href="#chromeMark" x="5" y="5" width="66" height="66"/></svg><span class="size-2 rounded-full bg-[#2c0478]"></span></a>
    <a href="#" aria-label="Slack" class="relative flex w-[98px] flex-col items-center gap-[11px]"><svg class="size-[76px]" viewBox="0 0 76 76"><rect width="76" height="76" rx="17" fill="#fff"/><g fill="#62c0ea"><rect x="11" y="25" width="26" height="12" rx="6"/><path d="M37 23h-6a6 6 0 1 1 6-6z"/></g><g fill="#5ab284"><rect x="39" y="11" width="12" height="26" rx="6"/><path d="M53 37v-6a6 6 0 1 1 6 6z"/></g><g fill="#e3b44c"><rect x="39" y="39" width="26" height="12" rx="6"/><path d="M39 53h6a6 6 0 1 1-6 6z"/></g><g fill="#cd3460"><rect x="25" y="39" width="12" height="26" rx="6"/><path d="M23 39v6a6 6 0 1 1-6-6z"/></g></svg><span class="size-2 rounded-full bg-[#2c0478]"></span><span class="absolute -top-[9px] right-0 flex size-9 items-center justify-center rounded-full bg-[#ea5248]"><span class="size-1 rounded-full bg-white"></span></span></a>
    <a href="#" aria-label="Unikey" class="flex w-[98px] justify-center"><svg class="size-[76px] overflow-visible" viewBox="0 0 76 76"><rect x="-5" y="-5" width="86" height="86" rx="3" fill="url(#gVim)" stroke="#4c5a20"/><text x="38" y="66" text-anchor="middle" font-family="Open Sans" font-weight="700" font-size="72" fill="#fff">V</text></svg></a>
    <a href="#" aria-label="Terminal" class="flex w-[98px] justify-center"><svg class="size-[76px]" viewBox="0 0 76 76"><rect width="76" height="76" rx="17" fill="url(#gSteel)"/><rect x="3" y="3" width="70" height="70" rx="15" fill="#000"/><rect x="9" y="9" width="58" height="58" rx="9" fill="#262626"/><path d="M14 15l8 4.500-8 4.500M26 29h11" fill="none" stroke="#fff" stroke-width="2.500"/></svg></a>
    <div class="flex w-11 justify-center"><span class="-mt-px h-[84px] w-0.5 bg-[#6428b4]"></span></div>
    <a href="#" aria-label="Downloads" class="flex w-[98px] justify-center"><svg class="size-[76px] overflow-visible" viewBox="0 0 76 76"><path d="M7-1h63v24H7z" fill="#141414"/><path d="M13-1h18v24H13z" fill="#f0f0f0"/><path d="M44-1l20 24H44z" fill="#f0f0f0"/><path d="M31-1h13v24H31z" fill="#4c4c50"/><path d="M38-1v24" stroke="#b0b4b8" stroke-width="6" stroke-dasharray="2 1"/><path d="M0 14c0-3 2-4 4-4h20c4 0 5 7 9 7h40c3 0 4 2 4 5v10H0z" fill="#4490d0"/><rect y="21" width="78" height="55" rx="4" fill="#84c8f4"/><path d="M0 67h78M0 71h78" stroke="#68b0e0"/></svg></a>
    <a href="#" aria-label="Minimised window" class="flex w-[98px] justify-center"><svg class="size-[76px] overflow-visible" viewBox="0 0 76 76"><path d="M-6 12h88v51H-6z" fill="#f2b878"/><path d="M-6 12h88v7H-6z" fill="#f4f0ee"/><path d="M-3 15h30M-3 22h12M20 22h40" stroke="#c07048" stroke-width="1.500"/><g fill="#fdf8f4"><path d="M8 25h7v20H8zM17 24h12v26H17zM31 24h12v38H31zM45 24h13v36H45zM60 24h14v16H60zM-5 52H8v10H-5z"/></g><g stroke="#b8a8a0" stroke-dasharray="2 1.500"><path d="M19 28h8M19 33h8M19 38h8M33 28h8M33 34h8M33 40h8M33 46h8M47 30h9M47 36h9M47 44h9M62 28h10M62 34h10M10 30h4M10 36h4"/></g><path d="M-5 61H8" stroke="#3c90d0" stroke-width="2"/><rect x="52" y="52" width="28" height="28" rx="6" fill="#fff"/><use href="#chromeMark" x="54" y="54" width="24" height="24"/></svg></a>
    <a href="#" aria-label="Trash" class="flex w-[98px] justify-center"><svg class="size-[76px] overflow-visible" viewBox="0 0 76 76"><ellipse cx="38" cy="5" rx="33" ry="8" fill="#b0a8c4"/><path d="M10 4l6-8 8 3 5-7 8 5 8-4 5 6 8-1 7 10-10 7H18z" fill="#f0f0f2"/><path d="M16 2l8 4-6 4zM32-4l6 8-9 2zM48 0l8 6-10 4zM40 4l5 4-6 3z" fill="#58606c"/><path d="M25 4l7-2 2 6-8 2z" fill="#5cb4dc"/><path d="M50-1l5 3-3 3z" fill="#b84c40"/><path d="M5 6c8 8 58 8 66 0l-7 66c-2 10-50 10-52 0z" fill="url(#gBin)"/><path d="M26 18c8 4 18 4 24 0-6 10-16 10-24 0z" fill="#eeeef2"/></svg></a>
  </nav>
</footer>
</body>
</html>
